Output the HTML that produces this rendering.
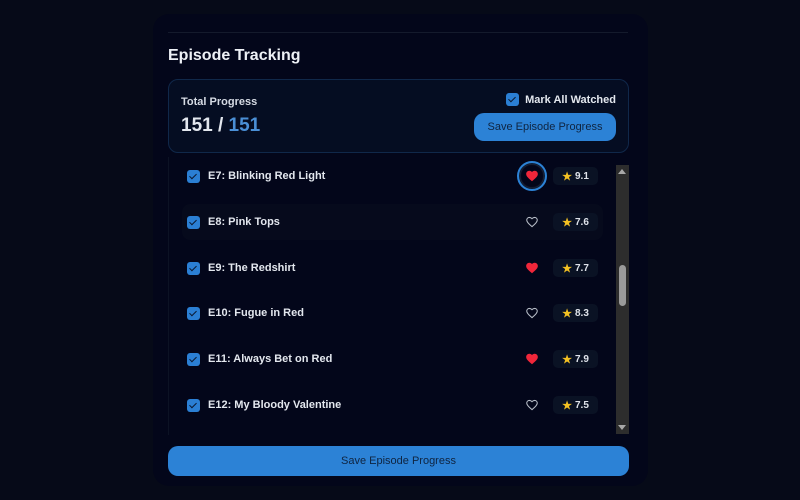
<!DOCTYPE html>
<html><head><meta charset="utf-8"><style>
*{box-sizing:border-box;margin:0;padding:0}
body{width:800px;height:500px;background:#060a18;font-family:"Liberation Sans",sans-serif;position:relative;overflow:hidden;color:#e8ecf3}
.card{position:absolute;left:153px;top:14px;width:495px;height:472px;background:#03061a;border-radius:16px}
.line{position:absolute;left:168px;top:32px;width:460px;height:1px;background:#141a2c}
h2{position:absolute;left:168px;top:47px;font-size:16px;font-weight:bold;color:#eef1f6}
.prog{position:absolute;left:168px;top:79px;width:461px;height:74px;border:1px solid #10284a;border-radius:10px;background:#050d22}
.tp{position:absolute;left:12px;top:16px;font-size:11px;font-weight:bold;color:#d6dbe4}
.num{position:absolute;left:12px;top:35px;font-size:19px;font-weight:bold;color:#e3e7ee}
.num span{color:#4a8fd6}
.cb{display:inline-block;width:13px;height:13px;border-radius:3px;background:#2b7fd4;position:relative}
.cb::after{content:"";position:absolute;left:4px;top:2px;width:3px;height:6px;border:solid #0b1a33;border-width:0 1.3px 1.3px 0;transform:rotate(45deg)}
.maw{position:absolute;right:12px;top:13px;font-size:11px;font-weight:bold;color:#e3e7ee;display:flex;align-items:center;gap:6px}
.btn{position:absolute;right:12px;top:33px;width:142px;height:28px;border-radius:10px;background:#2c82d6;color:#0f2440;font-size:11px;display:flex;align-items:center;justify-content:center}
.list{position:absolute;left:168px;top:157px;width:461px;height:278px;overflow:hidden;border-left:1px solid #0c1224}
.row{position:absolute;left:13px;width:421px;height:36px;display:flex;align-items:center;border-radius:8px;padding-left:5px}
.row .t{margin-left:8px;font-size:11px;font-weight:bold;color:#e3e7ee;flex:1}
.rt{position:absolute;right:5px;width:45px;height:18px;border-radius:5px;background:#0a1224;font-size:10px;font-weight:bold;color:#dfe3ea;display:flex;align-items:center;justify-content:center;gap:3px}
.rt b{color:#f4c122;font-size:11px}
.h{position:absolute;right:64px;width:14px;height:14px}
.sb{position:absolute;left:616px;top:165px;width:13px;height:269px;background:#2d2d2d}
.th{position:absolute;left:619px;top:265px;width:7px;height:41px;border-radius:4px;background:#9a9a9a}
.bottom{position:absolute;left:168px;top:446px;width:461px;height:30px;border-radius:10px;background:#2c82d6;color:#0f2440;font-size:11px;display:flex;align-items:center;justify-content:center}
</style></head><body>
<div class="card"></div>
<div class="line"></div>
<h2>Episode Tracking</h2>
<div class="prog">
<div class="tp">Total Progress</div>
<div class="num">151 / <span>151</span></div>
<div class="maw"><span class="cb"></span>Mark All Watched</div>
<div class="btn">Save Episode Progress</div>
</div>
<div class="list">
<div class="row" style="top:1px"><span class="cb"></span><span class="t">E7: Blinking Red Light</span>
<div style="position:absolute;right:56px;width:30px;height:30px;border-radius:50%;border:2px solid #2c82d6;box-shadow:0 0 0 1px #0a1a30 inset, 0 0 2px #cfe3ff inset"></div>
<svg class="h" viewBox="0 0 24 24"><path d="M12 21l-1.5-1.3C5 15 2 12 2 8.5 2 5.5 4.4 3 7.5 3c1.7 0 3.4.8 4.5 2.1C13.1 3.8 14.8 3 16.5 3 19.6 3 22 5.5 22 8.5c0 3.5-3 6.5-8.5 11.2z" fill="#f0263a"/></svg>
<div class="rt"><b>★</b>9.1</div></div>
<div class="row" style="top:47px;background:#060a1c"><span class="cb"></span><span class="t">E8: Pink Tops</span>
<svg class="h" viewBox="0 0 24 24"><path d="M12 20l-1.3-1.2C5.5 14.5 3 12 3 8.8 3 6.2 5 4.2 7.5 4.2c1.7 0 3.3.8 4.5 2.1 1.2-1.3 2.8-2.1 4.5-2.1C19 4.2 21 6.2 21 8.8c0 3.2-2.5 5.7-7.7 10z" fill="none" stroke="#b8bec8" stroke-width="1.8"/></svg>
<div class="rt"><b>★</b>7.6</div></div>
<div class="row" style="top:93px"><span class="cb"></span><span class="t">E9: The Redshirt</span>
<svg class="h" viewBox="0 0 24 24"><path d="M12 21l-1.5-1.3C5 15 2 12 2 8.5 2 5.5 4.4 3 7.5 3c1.7 0 3.4.8 4.5 2.1C13.1 3.8 14.8 3 16.5 3 19.6 3 22 5.5 22 8.5c0 3.5-3 6.5-8.5 11.2z" fill="#f0263a"/></svg>
<div class="rt"><b>★</b>7.7</div></div>
<div class="row" style="top:138px"><span class="cb"></span><span class="t">E10: Fugue in Red</span>
<svg class="h" viewBox="0 0 24 24"><path d="M12 20l-1.3-1.2C5.5 14.5 3 12 3 8.8 3 6.2 5 4.2 7.5 4.2c1.7 0 3.3.8 4.5 2.1 1.2-1.3 2.8-2.1 4.5-2.1C19 4.2 21 6.2 21 8.8c0 3.2-2.5 5.7-7.7 10z" fill="none" stroke="#b8bec8" stroke-width="1.8"/></svg>
<div class="rt"><b>★</b>8.3</div></div>
<div class="row" style="top:184px"><span class="cb"></span><span class="t">E11: Always Bet on Red</span>
<svg class="h" viewBox="0 0 24 24"><path d="M12 21l-1.5-1.3C5 15 2 12 2 8.5 2 5.5 4.4 3 7.5 3c1.7 0 3.4.8 4.5 2.1C13.1 3.8 14.8 3 16.5 3 19.6 3 22 5.5 22 8.5c0 3.5-3 6.5-8.5 11.2z" fill="#f0263a"/></svg>
<div class="rt"><b>★</b>7.9</div></div>
<div class="row" style="top:230px"><span class="cb"></span><span class="t">E12: My Bloody Valentine</span>
<svg class="h" viewBox="0 0 24 24"><path d="M12 20l-1.3-1.2C5.5 14.5 3 12 3 8.8 3 6.2 5 4.2 7.5 4.2c1.7 0 3.3.8 4.5 2.1 1.2-1.3 2.8-2.1 4.5-2.1C19 4.2 21 6.2 21 8.8c0 3.2-2.5 5.7-7.7 10z" fill="none" stroke="#b8bec8" stroke-width="1.8"/></svg>
<div class="rt"><b>★</b>7.5</div></div>
</div>
<div class="sb"><div style="position:absolute;left:2px;top:4px;border:4px solid transparent;border-bottom:5px solid #a8a8a8;border-top:0"></div><div style="position:absolute;left:2px;bottom:4px;border:4px solid transparent;border-top:5px solid #a8a8a8;border-bottom:0"></div></div>
<div class="th"></div>
<div class="bottom">Save Episode Progress</div>
</body></html>
